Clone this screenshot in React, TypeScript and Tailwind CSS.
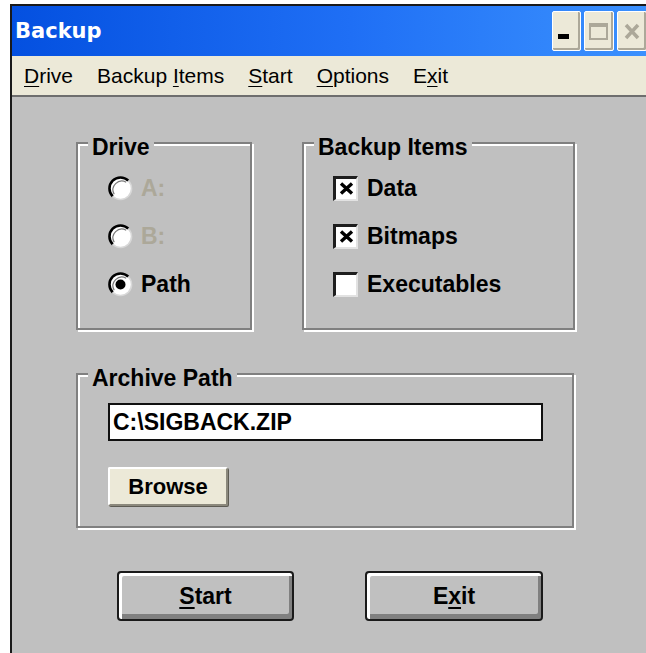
import React from "react";

const sans = "font-['Liberation_Sans',Arial,sans-serif]";

function GroupBox({
  label,
  className,
  children,
}: {
  label: string;
  className: string;
  children: React.ReactNode;
}) {
  return (
    <div
      className={`relative border-2 border-[#808080] shadow-[inset_2px_2px_0_#ffffff,2px_2px_0_#ffffff] ${className}`}
    >
      <span className="absolute left-[10px] top-[-8px] bg-[#c0c0c0] px-[4px] text-[23px] font-bold leading-[23px] text-black">
        {label}
      </span>
      {children}
    </div>
  );
}

function Radio({ checked }: { checked?: boolean }) {
  return (
    <svg width="25" height="25" viewBox="0 0 25 25" className="shrink-0">
      <circle cx="12.5" cy="12.5" r="11" fill="#ffffff" />
      <path d="M4.7 20.3 A11 11 0 0 1 20.3 4.7" fill="none" stroke="#000000" strokeWidth="2.6" />
      <path d="M6.2 18.2 A8.8 8.8 0 0 1 18.2 6.2" fill="none" stroke="#7a7a7a" strokeWidth="1.2" />
      <path d="M20.3 4.7 A11 11 0 0 1 4.7 20.3" fill="none" stroke="#d8d8d8" strokeWidth="1.6" />
      {checked && <circle cx="12.5" cy="12.5" r="5" fill="#000000" />}
    </svg>
  );
}

function CheckBox({ checked }: { checked?: boolean }) {
  return (
    <span className="flex h-[25px] w-[25px] shrink-0 items-center justify-center border-b-2 border-l-[3px] border-r-2 border-t-[3px] border-b-[#e2e2e2] border-l-[#1e1e1e] border-r-[#e2e2e2] border-t-[#1e1e1e] bg-white">
      {checked && (
        <svg width="15" height="13" viewBox="0 0 15 13">
          <path d="M2 1.5 L13 11.5 M13 1.5 L2 11.5" stroke="#000000" strokeWidth="3.4" />
        </svg>
      )}
    </span>
  );
}

function ClassicButton({ children, width }: { children: React.ReactNode; width: string }) {
  return (
    <div
      className={`flex h-[50px] ${width} items-center justify-center rounded-[4px] border-2 border-[#1a1a1a] bg-[#c0c0c0] text-[23px] font-bold text-black shadow-[inset_3px_3px_0_#ffffff,inset_-3px_-5px_0_#808080]`}
    >
      {children}
    </div>
  );
}

export default function App() {
  return (
    <div className={`h-[653px] w-[646px] overflow-hidden bg-white pl-[10px] pt-[4px] ${sans}`}>
      <div className="flex h-[700px] w-[680px] flex-col border-l-2 border-t-2 border-[#1a1a1a]">
        {/* caption */}
        <div className="flex h-[50px] items-center bg-linear-to-r from-[#0450e0] via-[#1f6ff5] to-[#3f95ff] pl-[3px]">
          <span className="font-['DejaVu_Sans',sans-serif] text-[21px] font-bold leading-none text-white">
            Backup
          </span>
          <div className="ml-[450px] flex gap-[3px]">
            <div className="relative h-[40px] w-[29px] rounded-[2px] border border-white bg-[#ece9d8] shadow-[inset_-2px_-2px_0_#aca899]">
              <span className="absolute left-[5px] top-[22px] h-[5px] w-[11px] bg-black" />
            </div>
            <div className="flex h-[40px] w-[30px] items-center justify-center rounded-[2px] border border-white bg-[#ece9d8] shadow-[inset_-2px_-2px_0_#aca899]">
              <span className="h-[17px] w-[19px] border-2 border-t-[4px] border-[#aca899]" />
            </div>
            <div className="flex h-[40px] w-[30px] items-center justify-center rounded-[2px] border border-white bg-[#ece9d8] shadow-[inset_-2px_-2px_0_#aca899]">
              <svg width="16" height="17" viewBox="0 0 16 17">
                <path d="M2 2 L14 15 M14 2 L2 15" stroke="#aca899" strokeWidth="3.5" />
              </svg>
            </div>
          </div>
        </div>

        {/* menu bar */}
        <div className="flex h-[39px] items-center bg-[#ece9d8] text-[21px] leading-none text-black">
          <span className="px-[12px]">
            <span className="underline decoration-1 underline-offset-[3px]">D</span>rive
          </span>
          <span className="px-[12px]">
            Backup <span className="underline decoration-1 underline-offset-[3px]">I</span>tems
          </span>
          <span className="px-[12px]">
            <span className="underline decoration-1 underline-offset-[3px]">S</span>tart
          </span>
          <span className="px-[12px]">
            <span className="underline decoration-1 underline-offset-[3px]">O</span>ptions
          </span>
          <span className="px-[12px]">
            E<span className="underline decoration-1 underline-offset-[3px]">x</span>it
          </span>
        </div>
        <div className="h-[2px] bg-[#6e6e6e]" />

        {/* dialog client area */}
        <div className="flex flex-1 flex-col bg-[#c0c0c0] pl-[64px] pt-[45px]">
          <div className="flex gap-[50px]">
            <GroupBox label="Drive" className="h-[188px] w-[176px]">
              <div className="flex flex-col pl-[30px] pt-[20px] text-[23px] font-bold">
                <div className="flex h-[48px] items-center gap-[8px]">
                  <Radio />
                  <span className="text-[#aca899]">A:</span>
                </div>
                <div className="flex h-[48px] items-center gap-[8px]">
                  <Radio />
                  <span className="text-[#aca899]">B:</span>
                </div>
                <div className="flex h-[48px] items-center gap-[8px]">
                  <Radio checked />
                  <span className="text-black">Path</span>
                </div>
              </div>
            </GroupBox>

            <GroupBox label="Backup Items" className="h-[188px] w-[273px]">
              <div className="flex flex-col pl-[29px] pt-[20px] text-[23px] font-bold text-black">
                <div className="flex h-[48px] items-center gap-[9px]">
                  <CheckBox checked />
                  <span>Data</span>
                </div>
                <div className="flex h-[48px] items-center gap-[9px]">
                  <CheckBox checked />
                  <span>Bitmaps</span>
                </div>
                <div className="flex h-[48px] items-center gap-[9px]">
                  <CheckBox />
                  <span>Executables</span>
                </div>
              </div>
            </GroupBox>
          </div>

          <div className="mt-[43px]">
            <GroupBox label="Archive Path" className="h-[155px] w-[498px]">
              <div className="flex flex-col items-start pl-[30px] pt-[28px]">
                <div className="flex h-[38px] w-[435px] items-center border-2 border-[#101010] bg-white pl-[3px] text-[23px] font-bold leading-none text-black">
                  C:\SIGBACK.ZIP
                </div>
                <div className="mt-[26px] flex h-[39px] w-[120px] items-center justify-center rounded-[2px] border-2 border-b-[#8b887c] border-l-white border-r-[#8b887c] border-t-white bg-[#ece9d8] text-[22px] font-bold text-black shadow-[1px_1px_0_#5e5c54]">
                  Browse
                </div>
              </div>
            </GroupBox>
          </div>

          <div className="mt-[43px] flex gap-[71px] pl-[41px]">
            <ClassicButton width="w-[177px]">
              <span>
                <span className="underline decoration-2 underline-offset-[3px]">S</span>tart
              </span>
            </ClassicButton>
            <ClassicButton width="w-[178px]">
              <span>
                E<span className="underline decoration-2 underline-offset-[3px]">x</span>it
              </span>
            </ClassicButton>
          </div>
        </div>
      </div>
    </div>
  );
}
